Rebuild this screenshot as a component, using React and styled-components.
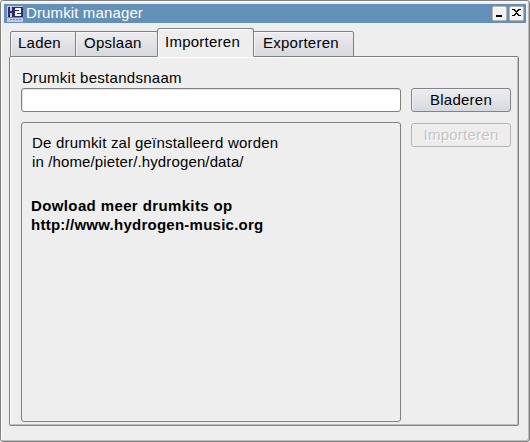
import React from "react";
import styled, { createGlobalStyle } from "styled-components";

const GlobalStyle = createGlobalStyle`
  * { box-sizing: border-box; }
  body { margin: 0; background: #eeeeee; }
`;

const Window = styled.div`
  width: 530px;
  height: 442px;
  padding: 2px 3px 0 2px;
  display: flex;
  flex-direction: column;
  background: #eeeeee;
  border: 1px solid #808080;
  border-radius: 3px;
  box-shadow: inset 1px 1px 0 #ffffff, inset -1px -1px 0 #bdbdbd;
  color: #000;
  font: 15px/19px "Liberation Sans", Arial, sans-serif;
  letter-spacing: 0.25px;
  white-space: nowrap;
`;

const TitleBar = styled.header`
  display: flex;
  align-items: center;
  flex: none;
  height: 19px;
  margin: 1px 0 0 1px;
  padding: 0 2px 0 3px;
  background: #6390b8;
`;

const Title = styled.h1`
  flex: 1;
  margin: 0 0 2px 3px;
  font: inherit;
  letter-spacing: 0.13px;
  color: #ffffff;
`;

const WindowButton = styled.button`
  width: 15px;
  height: 15px;
  margin-left: 2px;
  padding: 0;
  display: flex;
  border: 1px solid #b9b5ae;
  border-radius: 2px;
  background: #f2f2f2;
  box-shadow: inset 1px 1px 0 #ffffff;
`;

const Tabs = styled.nav`
  display: flex;
  align-items: flex-end;
  flex: none;
  height: 29px;
  margin: 5px 0 -1px 7px;
  z-index: 1;
`;

const Tab = styled.button`
  width: ${(p) => p.$width}px;
  height: ${(p) => (p.$active ? 29 : 26)}px;
  margin: 0 0 0 ${(p) => (p.$first ? 0 : -1)}px;
  padding: 0 0 ${(p) => (p.$active ? 3 : 4)}px ${(p) => p.$pad}px;
  font: inherit;
  letter-spacing: inherit;
  text-align: left;
  color: #000;
  border: 1px solid #808080;
  border-bottom-color: ${(p) => (p.$active ? "#eeeeee" : "#808080")};
  border-radius: ${(p) => (p.$active ? "3px 3px 0 0" : p.$first ? "2px 0 0 0" : "0 2px 0 0")};
  background: ${(p) => (p.$active ? "#eeeeee" : "linear-gradient(#ededf0, #e0e0e6 55%, #d6dade)")};
  box-shadow: inset 1px 1px 0 ${(p) => (p.$active ? "#ffffff" : "#f5f5f5")};
  z-index: ${(p) => (p.$active ? 1 : 0)};
`;

const Pane = styled.main`
  display: grid;
  grid-template-columns: 380px 100px;
  grid-template-rows: 20px 24px 24px 276px;
  column-gap: 10px;
  flex: none;
  width: 510px;
  height: 370px;
  margin-left: 6px;
  padding: 11px 0 0 11px;
  border: 1px solid #808080;
  border-radius: 2px;
  box-shadow: inset 1px 1px 0 #ffffff, inset -1px -1px 0 #bdbdbd;
`;

const Label = styled.label`
  grid-column: 1 / 3;
  padding-left: 1px;
  letter-spacing: 0.28px;
`;

const FileInput = styled.input`
  width: 380px;
  height: 24px;
  padding: 0 4px;
  font: inherit;
  border: 1px solid #808080;
  border-radius: 3px;
  background: #ffffff;
  box-shadow: inset 1px 1px 0 #e4e4e4;
`;

const PushButton = styled.button`
  height: 24px;
  padding: 0 0 1px;
  font: inherit;
  letter-spacing: inherit;
  color: #000;
  border: 1px solid #80838a;
  border-radius: 3px;
  background: linear-gradient(#ececef, #e3e3e9 50%, #d5dade);
  box-shadow: inset 1px 1px 0 #f3f3f5;
  &:disabled {
    color: #c4c4c4;
    text-shadow: 1px 1px 0 #ffffff;
    border-color: #b5b5b5;
    background: #eeecec;
    box-shadow: none;
  }
`;

const InfoPanel = styled.section`
  grid-column: 1;
  grid-row: 3 / 5;
  height: 300px;
  margin-top: 10px;
  padding: 10px 0 0 10px;
  border: 1px solid #808080;
  border-radius: 3px;
`;

const ImportCell = styled.div`
  display: grid;
  grid-column: 2;
  grid-row: 3;
  margin-top: 11px;
  height: 24px;
`;

const Info = styled.p`
  margin: 0;
  letter-spacing: 0.2px;
`;

const PathText = styled.span`
  letter-spacing: 0.13px;
`;

const Download = styled.p`
  margin: 25px 0 0 -1px;
  font-weight: bold;
`;

const DownloadLead = styled.span`
  letter-spacing: 0.38px;
`;

const Logo = () => (
  <svg width="16" height="16" viewBox="0 0 16 16" shapeRendering="crispEdges">
    <path fill="#c3c9e2" d="M0 0h16v16H0z" />
    <path fill="#2d3068" d="M1 1h2v4h2V1h11v10H5V7H3v4H1z" />
    <path fill="#f0f2fa" d="M8 2h6v5h-4v1h4v2H8V5h4V4H8z" />
    <path fill="#8085ae" d="M0 11h16v1H0zM3 13h2v1H3zM6 13h2v1H6zM9 13h2v1H9zM12 13h2v1h-2z" />
  </svg>
);

const MinimizeIcon = () => (
  <svg width="13" height="13" shapeRendering="crispEdges">
    <path d="M3 8h6v2H3z" />
  </svg>
);

const CloseIcon = () => (
  <svg width="13" height="13" shapeRendering="crispEdges">
    <path d="M2 2h3v1h1v1h1V3h1V2h3v1H9v1H8v1H7v1h1v1h1v1h2v1H8V8H7V7H6v1H5v1H2V8h2V7h1V6h1V5H5V4H4V3H2z" />
  </svg>
);

export default function App() {
  return (
    <>
      <GlobalStyle />
      <Window>
        <TitleBar>
          <Logo />
          <Title>Drumkit manager</Title>
          <WindowButton aria-label="Minimize"><MinimizeIcon /></WindowButton>
          <WindowButton aria-label="Close"><CloseIcon /></WindowButton>
        </TitleBar>
        <Tabs>
          <Tab $width={66} $pad={7} $first>Laden</Tab>
          <Tab $width={83} $pad={8}>Opslaan</Tab>
          <Tab $width={97} $pad={7} $active>Importeren</Tab>
          <Tab $width={101} $pad={9}>Exporteren</Tab>
        </Tabs>
        <Pane>
          <Label htmlFor="file">Drumkit bestandsnaam</Label>
          <FileInput id="file" />
          <PushButton>Bladeren</PushButton>
          <InfoPanel>
            <Info>De drumkit zal geïnstalleerd worden<br /><PathText>in /home/pieter/.hydrogen/data/</PathText></Info>
            <Download><DownloadLead>Dowload meer drumkits op</DownloadLead><br />http://www.hydrogen-music.org</Download>
          </InfoPanel>
          <ImportCell><PushButton disabled>Importeren</PushButton></ImportCell>
        </Pane>
      </Window>
    </>
  );
}
